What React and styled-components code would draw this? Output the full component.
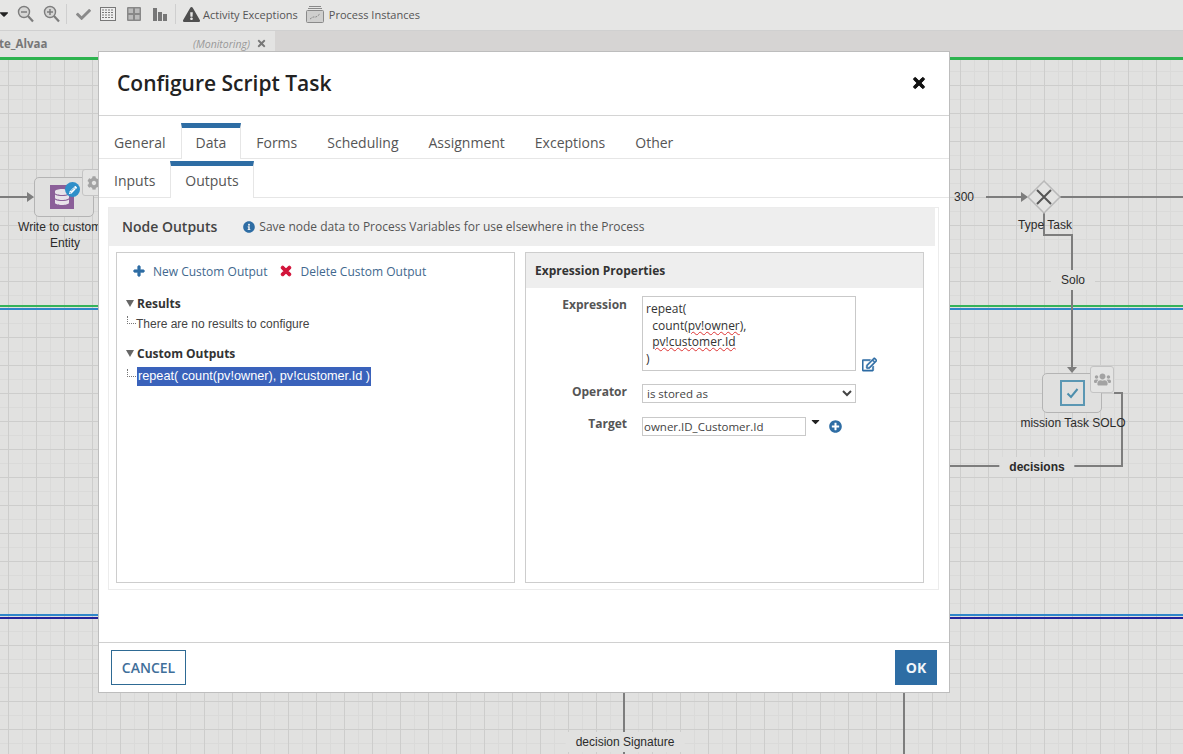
import React from "react";
import styled, { createGlobalStyle } from "styled-components";
import {
  FaPlus,
  FaTimes,
  FaInfoCircle,
  FaPlusCircle,
  FaRegEdit,
  FaUsers,
  FaCog,
  FaDatabase,
  FaPencilAlt,
  FaCheck,
  FaExclamationTriangle,
  FaCaretDown,
} from "react-icons/fa";

const GlobalStyle = createGlobalStyle`
  html, body {
    margin: 0;
    padding: 0;
    background: #e1e1e0;
    font-family: "Open Sans", "Liberation Sans", sans-serif;
  }
`;

const Page = styled.div`
  position: relative;
  width: 1183px;
  height: 754px;
  overflow: hidden;
  display: flex;
  flex-direction: column;
`;

const Toolbar = styled.div`
  height: 31px;
  flex: none;
  box-sizing: border-box;
  padding-bottom: 2px;
  display: flex;
  align-items: center;
  background: #e6e6e5;
  border-bottom: 1px solid #d0d0d0;
  color: #555;
  font-size: 11px;
  overflow: hidden;
`;

const ToolIcon = styled.span`
  display: inline-flex;
  flex: none;
  margin-left: ${(p) => p.$left || 0}px;
  color: ${(p) => p.$color || "#777"};
`;

const ToolSeparator = styled.span`
  width: 1px;
  height: 20px;
  flex: none;
  background: #cfcfcf;
  margin-left: ${(p) => p.$left}px;
`;

const ToolLabel = styled.span`
  margin-left: ${(p) => p.$left}px;
  white-space: nowrap;
`;

const TabStrip = styled.div`
  height: 27px;
  flex: none;
  display: flex;
  background: #d6d4d3;
`;

const DocTab = styled.div`
  width: 275px;
  box-sizing: border-box;
  display: flex;
  align-items: center;
  padding: 0 8px 2px 0;
  background: #e3e3e2;
  font-size: 11.5px;
  color: #777;
`;

const DocName = styled.span`
  font-weight: 700;
  flex: 1;
  margin-left: -1px;
`;

const DocState = styled.span`
  font-style: italic;
  font-size: 10.5px;
  color: #999;
  margin-right: 6px;
`;

const Canvas = styled.div`
  position: relative;
  flex: 1;
  background-color: #e1e1e0;
  background-image:
    linear-gradient(to right, #cdcdcc 1px, transparent 1px),
    linear-gradient(to bottom, #cdcdcc 1px, transparent 1px),
    linear-gradient(to right, #dadad9 1px, transparent 1px),
    linear-gradient(to bottom, #dadad9 1px, transparent 1px);
  background-size: 28px 28px, 28px 28px, 14px 14px, 14px 14px;
  background-position: 8px 27px, 8px 27px, 8px 13px, 8px 13px;
`;

const Connectors = styled.svg`
  position: absolute;
  left: 0;
  top: 0;
  width: 1183px;
  height: 696px;
  overflow: visible;
`;

const NodeBox = styled.div`
  position: absolute;
  left: ${(p) => p.$x}px;
  top: ${(p) => p.$y}px;
  width: 60px;
  height: 40px;
  box-sizing: border-box;
  background: #e0e0df;
  border: 1px solid #b4b4b4;
  border-radius: 5px;
`;

const NodeBadge = styled.div`
  position: absolute;
  left: ${(p) => p.$x}px;
  top: ${(p) => p.$y}px;
  width: 24px;
  height: 27px;
  box-sizing: border-box;
  background: #e4e4e3;
  border: 1px solid #c4c4c4;
  border-radius: 3px;
  color: #a3a3a3;
  display: flex;
  align-items: center;
  justify-content: center;
`;

const DiagramLabel = styled.div`
  position: absolute;
  left: ${(p) => p.$x}px;
  top: ${(p) => p.$y}px;
  transform: translate(-50%, -50%);
  font-family: "Liberation Sans", Arial, sans-serif;
  font-size: 12px;
  font-weight: ${(p) => (p.$bold ? 700 : 400)};
  line-height: 16px;
  color: #2b2b2b;
  white-space: nowrap;
  text-align: center;
  padding: ${(p) => (p.$pad ? "2px 10px" : 0)};
  background: ${(p) => (p.$pad ? "#e1e1e0" : "transparent")};
`;

const PurpleIcon = styled.div`
  position: absolute;
  left: 15px;
  top: 7px;
  width: 24px;
  height: 24px;
  background: #8b5f99;
  color: #e8e3ea;
  display: flex;
  align-items: center;
  justify-content: center;
`;

const PencilBubble = styled.div`
  position: absolute;
  left: 30px;
  top: 4px;
  width: 15px;
  height: 15px;
  border-radius: 50%;
  background: #2f8fc9;
  color: #fff;
  display: flex;
  align-items: center;
  justify-content: center;
`;

const TaskIcon = styled.div`
  position: absolute;
  left: 17px;
  top: 6px;
  width: 25px;
  height: 26px;
  box-sizing: border-box;
  border: 2px solid #5b97b3;
  display: flex;
  align-items: center;
  justify-content: center;
`;

const Modal = styled.div`
  position: absolute;
  left: 98px;
  top: 51px;
  width: 852px;
  height: 642px;
  box-sizing: border-box;
  background: #fff;
  border: 1px solid #bdbdbd;
  display: flex;
  flex-direction: column;
`;

const ModalHeader = styled.div`
  height: 64px;
  flex: none;
  box-sizing: border-box;
  display: flex;
  align-items: center;
  justify-content: space-between;
  padding: 0 22px 2px 18px;
  border-bottom: 1px solid #d4d4d4;
`;

const ModalTitle = styled.h1`
  margin: 0;
  font-size: 21px;
  font-weight: 600;
  color: #222;
`;

const CloseButton = styled.span`
  display: inline-flex;
  color: #111;
  svg {
    stroke: currentColor;
    stroke-width: 30px;
  }
`;

const TabRow = styled.div`
  display: flex;
  height: ${(p) => p.$height}px;
  flex: none;
  box-sizing: border-box;
  border-bottom: 1px solid #e6e6e6;
`;

const Tab = styled.div`
  box-sizing: border-box;
  padding: 0 14px ${(p) => (p.$active ? 3 : 2)}px;
  display: flex;
  align-items: center;
  margin-top: ${(p) => p.$top}px;
  font-size: 14px;
  color: #555;
  border-top: 5px solid ${(p) => (p.$active ? "#2e6da4" : "transparent")};
  border-left: 1px solid ${(p) => (p.$active ? "#e6e6e6" : "transparent")};
  border-right: 1px solid ${(p) => (p.$active ? "#e6e6e6" : "transparent")};
  margin-bottom: ${(p) => (p.$active ? "-1px" : 0)};
  background: #fff;
`;

const Body = styled.div`
  flex: 1;
  padding: 9px 10px 0 9px;
`;

const OutputsPanel = styled.div`
  height: 383px;
  box-sizing: border-box;
  border: 1px solid #ececec;
  display: flex;
  flex-direction: column;
`;

const NodeHeader = styled.div`
  height: 38px;
  flex: none;
  box-sizing: border-box;
  margin-right: 3px;
  padding: 0 0 1px 13px;
  display: flex;
  align-items: center;
  background: #eee;
`;

const NodeTitle = styled.span`
  font-size: 14px;
  font-weight: 600;
  color: #444;
`;

const NodeHint = styled.span`
  display: inline-flex;
  align-items: center;
  gap: 4px;
  margin-left: 26px;
  font-size: 12px;
  color: #555;
`;

const Columns = styled.div`
  flex: 1;
  display: flex;
  gap: 10px;
  padding: 6px 14px 6px 7px;
  min-height: 0;
`;

const TreePanel = styled.div`
  width: 399px;
  box-sizing: border-box;
  border: 1px solid #cdcdcd;
  padding: 9px 9px;
`;

const Actions = styled.div`
  display: flex;
  align-items: center;
  height: 18px;
  padding-left: 7px;
  font-size: 12px;
  color: #41688e;
`;

const ActionIcon = styled.span`
  display: inline-flex;
  color: ${(p) => p.$color};
  margin: 0 8px 0 ${(p) => p.$left || 0}px;
  svg {
    stroke: currentColor;
    stroke-width: 40px;
  }
`;

const TreeHeading = styled.div`
  display: flex;
  align-items: center;
  height: 16px;
  margin-top: ${(p) => p.$top}px;
  font-size: 12px;
  font-weight: 700;
  color: #333;
`;

const Caret = styled.span`
  width: 0;
  height: 0;
  border-left: 4px solid transparent;
  border-right: 4px solid transparent;
  border-top: 7px solid #666;
  margin-right: 3px;
`;

const TreeRow = styled.div`
  display: flex;
  align-items: center;
  margin-top: ${(p) => p.$top}px;
  font-family: "Liberation Sans", Arial, sans-serif;
  font-size: 12px;
  color: #444;
`;

const TreeDots = styled.span`
  width: 9px;
  height: 8px;
  flex: none;
  margin-top: -8px;
  margin-left: 1px;
  box-sizing: border-box;
  border-left: 1px dotted #777;
  border-bottom: 1px dotted #777;
`;

const TreeSelected = styled.span`
  padding: 2px 1px;
  height: 19px;
  box-sizing: border-box;
  line-height: 15px;
  margin-left: 1px;
  background: #3a62bb;
  color: #fff;
  font-size: 12.7px;
  white-space: nowrap;
`;

const PropsPanel = styled.div`
  width: 399px;
  box-sizing: border-box;
  border: 1px solid #cdcdcd;
  display: flex;
  flex-direction: column;
`;

const PropsHeader = styled.div`
  height: 35px;
  flex: none;
  box-sizing: border-box;
  padding-left: 9px;
  display: flex;
  align-items: center;
  background: #eee;
  font-size: 12px;
  font-weight: 700;
  color: #333;
`;

const PropsForm = styled.div`
  display: grid;
  grid-template-columns: 101px 214px 1fr;
  column-gap: 15px;
  align-items: start;
  margin-top: 8px;
`;

const FieldLabel = styled.label`
  text-align: right;
  font-size: 12px;
  font-weight: 700;
  color: #555;
  margin-top: ${(p) => p.$top || 0}px;
`;

const ExpressionBox = styled.div`
  height: 75px;
  box-sizing: border-box;
  border: 1px solid #c9c9c9;
  padding: 4px 3px;
  font-size: 12px;
  line-height: 16.5px;
  color: #333;
  white-space: pre;
`;

const Spell = styled.span`
  text-decoration: underline wavy #d33;
  text-decoration-thickness: 1px;
`;

const EditLink = styled.span`
  display: inline-flex;
  margin: 61px 0 0 -9px;
  color: #2e6da4;
  svg {
    stroke: currentColor;
    stroke-width: 20px;
  }
`;

const OperatorSelect = styled.select`
  width: 214px;
  height: 19px;
  box-sizing: border-box;
  margin: 12px 0 0;
  padding: 0;
  border: 1px solid #c9c9c9;
  background: #fff;
  font-family: "Open Sans", sans-serif;
  font-size: 11.5px;
  color: #444;
`;

const TargetCell = styled.div`
  display: flex;
  align-items: flex-start;
  grid-column: 2 / 4;
  margin-top: 14px;
`;

const TargetInput = styled.input`
  width: 164px;
  height: 19px;
  box-sizing: border-box;
  padding: 1px 1px;
  border: 1px solid #c9c9c9;
  font-family: "Open Sans", sans-serif;
  font-size: 11.5px;
  color: #444;
`;

const TargetCaret = styled.span`
  display: inline-flex;
  margin: -2px 0 0 3px;
  color: #222;
`;

const TargetAdd = styled.span`
  display: inline-flex;
  margin: 3px 0 0 7px;
  color: #2e6da4;
`;

const ModalFooter = styled.div`
  height: 50px;
  flex: none;
  box-sizing: border-box;
  border-top: 1px solid #d0d0d0;
  padding: 7px 12px 7px 12px;
  display: flex;
  justify-content: space-between;
`;

const Button = styled.button`
  height: 35px;
  box-sizing: border-box;
  padding: 0;
  width: ${(p) => (p.$primary ? 42 : 75)}px;
  border: ${(p) => (p.$primary ? "none" : "1px solid #2e6a94")};
  background: ${(p) => (p.$primary ? "#2e6da4" : "#fff")};
  color: ${(p) => (p.$primary ? "#f2f6fa" : "#3f6f9a")};
  font-family: "Open Sans", sans-serif;
  font-size: 14px;
  font-weight: ${(p) => (p.$primary ? 700 : 600)};
`;

function ZoomIcon({ plus }) {
  return (
    <svg width="17" height="18" viewBox="0 0 17 18" fill="none" stroke="#7d7d7d">
      <circle cx="7" cy="7" r="5.5" strokeWidth="1.4" fill="#d6d6d5" />
      <path d="M11 11l5 5.5" strokeWidth="2.2" />
      <path d="M4 7h6" strokeWidth="1.5" />
      {plus && <path d="M7 4v6" strokeWidth="1.5" />}
    </svg>
  );
}

function TableIcon() {
  return (
    <svg width="16" height="14" viewBox="0 0 16 14" fill="none" stroke="#777">
      <rect x="0.5" y="0.5" width="15" height="13" fill="#eee" />
      <path d="M2 3h12M2 5.5h12M2 8h12M2 10.5h12" strokeDasharray="2 1" />
    </svg>
  );
}

function GridIcon() {
  return (
    <svg width="14" height="14" viewBox="0 0 14 14">
      <rect width="14" height="14" rx="1" fill="#888" />
      <rect x="1.5" y="1.5" width="4.5" height="4.5" fill="#bbb" />
      <rect x="8" y="1.5" width="4.5" height="4.5" fill="#bbb" />
      <rect x="1.5" y="8" width="4.5" height="4.5" fill="#bbb" />
      <rect x="8" y="8" width="4.5" height="4.5" fill="#bbb" />
    </svg>
  );
}

function BarsIcon() {
  return (
    <svg width="14" height="13" viewBox="0 0 14 13" fill="#777">
      <rect x="0" y="0" width="4" height="13" />
      <rect x="5" y="4" width="4" height="9" />
      <rect x="10" y="6" width="4" height="7" />
    </svg>
  );
}

function ArchiveIcon() {
  return (
    <svg width="18" height="18" viewBox="0 0 18 18" fill="none" stroke="#8a8a8a">
      <path d="M3 1.5h12M2 3.5h14" />
      <rect x="0.5" y="5.5" width="17" height="12" rx="1" fill="#cfcfce" />
      <path d="M4 14l3-2 3 0 4-3" strokeDasharray="2 1" />
    </svg>
  );
}

function TaskCheck() {
  return (
    <svg width="13" height="11" viewBox="0 0 13 11" fill="none" stroke="#4d8eac" strokeWidth="2">
      <path d="M1.5 5.5l3.5 3.5 6.5-8" />
    </svg>
  );
}

function DiagramLines() {
  return (
    <Connectors viewBox="0 0 1183 696">
      <g fill="none">
        <path d="M0 0.5h1183" stroke="#2db34f" strokeWidth="3" />
        <path d="M0 248h1183" stroke="#35b35a" strokeWidth="2" />
        <path d="M0 251h1183" stroke="#2f86c9" strokeWidth="2" />
        <path d="M0 557h1183" stroke="#2f86c9" strokeWidth="2" />
        <path d="M0 560h1183" stroke="#23239b" strokeWidth="2" />
        <g stroke="#7d7d7d" strokeWidth="2">
          <path d="M0 139h30" />
          <path d="M986 139h38M1060 139h123" />
          <path d="M1044 155v22h28v136" />
          <path d="M1114 335h8v73H950" />
          <path d="M624 630v66M904 630v66" />
        </g>
        <g fill="#7d7d7d" stroke="none">
          <path d="M27 134l7 5-7 5z" />
          <path d="M1021 134l7 5-7 5z" />
          <path d="M1067 309l5 6 5-6z" />
        </g>
        <path d="M1044 123l16 16-16 16-16-16z" fill="#e3e3e2" stroke="#b9b9b9" strokeWidth="1.5" />
        <path d="M1037 132l14 14M1051 132l-14 14" stroke="#555" strokeWidth="2" />
      </g>
    </Connectors>
  );
}

function ProcessDiagram() {
  return (
    <Canvas>
      <DiagramLines />
      <NodeBox $x={34} $y={119}>
        <PurpleIcon>
          <FaDatabase size={16} />
        </PurpleIcon>
        <PencilBubble>
          <FaPencilAlt size={8} />
        </PencilBubble>
      </NodeBox>
      <NodeBadge $x={82} $y={111}>
        <FaCog size={14} />
      </NodeBadge>
      <DiagramLabel $x={65} $y={177}>
        Write to customer
        <br />
        Entity
      </DiagramLabel>
      <DiagramLabel $x={964} $y={139}>300</DiagramLabel>
      <DiagramLabel $x={1045} $y={167}>Type Task</DiagramLabel>
      <DiagramLabel $x={1073} $y={222} $pad>Solo</DiagramLabel>
      <NodeBox $x={1042} $y={315}>
        <TaskIcon>
          <TaskCheck />
        </TaskIcon>
      </NodeBox>
      <NodeBadge $x={1090} $y={308}>
        <FaUsers size={17} />
      </NodeBadge>
      <DiagramLabel $x={1073} $y={365}>mission Task SOLO</DiagramLabel>
      <DiagramLabel $x={1037} $y={409} $bold $pad>decisions</DiagramLabel>
      <DiagramLabel $x={625} $y={684} $pad>decision Signature</DiagramLabel>
    </Canvas>
  );
}

function ConfigureDialog() {
  return (
    <Modal>
      <ModalHeader>
        <ModalTitle>Configure Script Task</ModalTitle>
        <CloseButton>
          <FaTimes size={16} />
        </CloseButton>
      </ModalHeader>
      <TabRow $height={43}>
        <Tab $top={7}>General</Tab>
        <Tab $top={7} $active>Data</Tab>
        <Tab $top={7}>Forms</Tab>
        <Tab $top={7}>Scheduling</Tab>
        <Tab $top={7}>Assignment</Tab>
        <Tab $top={7}>Exceptions</Tab>
        <Tab $top={7}>Other</Tab>
      </TabRow>
      <TabRow $height={39}>
        <Tab $top={2}>Inputs</Tab>
        <Tab $top={2} $active>Outputs</Tab>
      </TabRow>
      <Body>
        <OutputsPanel>
          <NodeHeader>
            <NodeTitle>Node Outputs</NodeTitle>
            <NodeHint>
              <FaInfoCircle size={12} color="#2e6da4" />
              Save node data to Process Variables for use elsewhere in the Process
            </NodeHint>
          </NodeHeader>
          <Columns>
            <TreePanel>
              <Actions>
                <ActionIcon $color="#2e6da4">
                  <FaPlus size={12} />
                </ActionIcon>
                New Custom Output
                <ActionIcon $color="#d2143a" $left={11}>
                  <FaTimes size={14} />
                </ActionIcon>
                Delete Custom Output
              </Actions>
              <TreeHeading $top={15}>
                <Caret />
                Results
              </TreeHeading>
              <TreeRow $top={6}>
                <TreeDots />
                There are no results to configure
              </TreeRow>
              <TreeHeading $top={14}>
                <Caret />
                Custom Outputs
              </TreeHeading>
              <TreeRow $top={6}>
                <TreeDots />
                <TreeSelected>repeat( count(pv!owner), pv!customer.Id )</TreeSelected>
              </TreeRow>
            </TreePanel>
            <PropsPanel>
              <PropsHeader>Expression Properties</PropsHeader>
              <PropsForm>
                <FieldLabel>Expression</FieldLabel>
                <ExpressionBox>
                  {"repeat(\n  count("}
                  <Spell>pv!owner</Spell>
                  {"),\n  "}
                  <Spell>pv!customer.Id</Spell>
                  {"\n)"}
                </ExpressionBox>
                <EditLink>
                  <FaRegEdit size={15} />
                </EditLink>
                <FieldLabel $top={11}>Operator</FieldLabel>
                <OperatorSelect defaultValue="stored">
                  <option value="stored">is stored as</option>
                </OperatorSelect>
                <span />
                <FieldLabel $top={12}>Target</FieldLabel>
                <TargetCell>
                  <TargetInput defaultValue="owner.ID_Customer.Id" />
                  <TargetCaret>
                    <FaCaretDown size={13} />
                  </TargetCaret>
                  <TargetAdd>
                    <FaPlusCircle size={13} />
                  </TargetAdd>
                </TargetCell>
              </PropsForm>
            </PropsPanel>
          </Columns>
        </OutputsPanel>
      </Body>
      <ModalFooter>
        <Button>CANCEL</Button>
        <Button $primary>OK</Button>
      </ModalFooter>
    </Modal>
  );
}

export default function App() {
  return (
    <Page>
      <GlobalStyle />
      <Toolbar>
        <ToolIcon $left={-3} $color="#222">
          <FaCaretDown size={14} />
        </ToolIcon>
        <ToolIcon $left={6}><ZoomIcon /></ToolIcon>
        <ToolIcon $left={9}><ZoomIcon plus /></ToolIcon>
        <ToolSeparator $left={6} />
        <ToolIcon $left={9} $color="#8a8a8a"><FaCheck size={15} /></ToolIcon>
        <ToolIcon $left={9}><TableIcon /></ToolIcon>
        <ToolIcon $left={11}><GridIcon /></ToolIcon>
        <ToolIcon $left={12}><BarsIcon /></ToolIcon>
        <ToolSeparator $left={8} />
        <ToolIcon $left={7} $color="#4f4f4f"><FaExclamationTriangle size={17} /></ToolIcon>
        <ToolLabel $left={3}>Activity Exceptions</ToolLabel>
        <ToolIcon $left={8}><ArchiveIcon /></ToolIcon>
        <ToolLabel $left={5}>Process Instances</ToolLabel>
      </Toolbar>
      <TabStrip>
        <DocTab>
          <DocName>te_Alvaa</DocName>
          <DocState>(Monitoring)</DocState>
          <FaTimes size={11} color="#777" />
        </DocTab>
      </TabStrip>
      <ProcessDiagram />
      <ConfigureDialog />
    </Page>
  );
}
